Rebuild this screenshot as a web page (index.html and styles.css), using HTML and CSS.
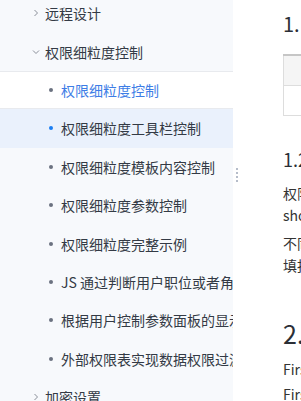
FILE: index.html
```html
<!DOCTYPE html>
<html>
<head>
  <meta charset="utf-8">
  <link rel="stylesheet" href="styles.css">
</head>
<body>
  <div class="page">
    <!-- left menu -->
    <div class="sidebar">
      <div class="menu-title">
        <svg class="arrow" viewBox="0 0 8 8"><path d="M2.5 1 L5.5 4 L2.5 7" /></svg>
        <span>远程设计</span>
      </div>
      <div class="menu-title">
        <svg class="arrow" viewBox="0 0 8 8"><path d="M1 2.5 L4 5.5 L7 2.5" /></svg>
        <span>权限细粒度控制</span>
      </div>
      <div class="sub-item active"><i class="dot"></i><span>权限细粒度控制</span></div>
      <div class="sub-item hover"><i class="dot"></i><span>权限细粒度工具栏控制</span></div>
      <div class="sub-item"><i class="dot"></i><span>权限细粒度模板内容控制</span></div>
      <div class="sub-item"><i class="dot"></i><span>权限细粒度参数控制</span></div>
      <div class="sub-item"><i class="dot"></i><span>权限细粒度完整示例</span></div>
      <div class="sub-item"><i class="dot"></i><span>JS 通过判断用户职位或者角色控制按钮</span></div>
      <div class="sub-item"><i class="dot"></i><span>根据用户控制参数面板的显示与隐藏</span></div>
      <div class="sub-item"><i class="dot"></i><span>外部权限表实现数据权限过滤</span></div>
      <div class="menu-title">
        <svg class="arrow" viewBox="0 0 8 8"><path d="M2.5 1 L5.5 4 L2.5 7" /></svg>
        <span>加密设置</span>
      </div>
    </div>

    <div class="resizer"><i></i><i></i><i></i><i></i></div>

    <!-- doc content -->
    <div class="content">
      <h2 class="h-first">1. 概述</h2>
      <table class="doc-table">
        <tr><th>版本</th><th>功能变动</th></tr>
        <tr><td>10.0</td><td>-</td></tr>
      </table>
      <h3>1.2 应用场景</h3>
      <p>权限细粒度控制可以根据用户的权限控制工具栏按钮的<br>show 与 hide。</p>
      <p>不同的用户登录后看到的报表内容不同，可<br>填报的范围也不同。</p>
      <h2 class="h-big">2. 示例</h2>
      <p class="step">First step</p>
      <p class="step">First step</p>
    </div>
  </div>
</body>
</html>
```

FILE: styles.css
```css
  body {
    margin: 0;
    background-color: #ffffff;
    font-family: "Noto Sans CJK SC", "Noto Sans", sans-serif;
    color: #333333;
  }

  .page {
    display: flex;
    height: 401px;
    overflow: hidden;
    position: relative;
  }

  /* left menu */
  .sidebar {
    width: 233px;
    flex: none;
    background-color: #f7f9fc;
    margin-top: -6px;
    font-size: 14px;
  }

  .menu-title,
  .sub-item {
    height: 38.4px;
    display: flex;
    align-items: center;
    white-space: nowrap;
    overflow: hidden;
    color: #333a45;
  }

  .menu-title {
    padding-left: 32px;
  }

  .arrow {
    width: 8px;
    height: 8px;
    margin-right: 5px;
    fill: none;
    stroke: #8a8f99;
    stroke-width: 1;
  }

  .sub-item {
    padding-left: 49px;
    box-sizing: border-box;
  }

  .dot {
    width: 4px;
    height: 4px;
    border-radius: 50%;
    background-color: #6b7280;
    margin-right: 8px;
    flex: none;
  }

  .sub-item.active {
    background-color: #ffffff;
    border-top: 1px solid #e8eaee;
    border-bottom: 1px solid #e8eaee;
    color: #3d7de6;
  }

  .sub-item.hover {
    background-color: #eaf1fc;
  }

  .sub-item.hover .dot {
    background-color: #1a7ef2;
  }

  /* drag handle between columns */
  .resizer {
    position: absolute;
    left: 236px;
    top: 168px;
    display: flex;
    flex-direction: column;
    gap: 2px;
  }

  .resizer i {
    width: 2px;
    height: 2px;
    background-color: #b6bdca;
  }

  /* content */
  .content {
    padding-left: 50px;
    white-space: nowrap;
    font-size: 14px;
  }

  .content h2,
  .content h3 {
    font-weight: normal;
    margin: 0;
    color: #2b2f36;
  }

  .h-first {
    font-size: 20px;
    margin-top: 9px !important;
    line-height: 30px;
  }

  .doc-table {
    border-collapse: collapse;
    margin-top: 15px;
    width: 500px;
    border-top: 2px solid #c6c6c6;
  }

  .doc-table th,
  .doc-table td {
    border: 1px solid #dddddd;
    height: 29px;
    width: 50%;
    padding: 0 10px;
    text-align: center;
    font-weight: normal;
  }

  .doc-table th {
    background-color: #f5f5f5;
  }

  .content h3 {
    font-size: 18px;
    margin-top: 30px;
    line-height: 26px;
  }

  .content p {
    margin: 0 0 6px;
    line-height: 22px;
  }

  .content h3 + p {
    margin-top: 10px;
  }

  .h-big {
    font-size: 25px;
    margin-top: 40px !important;
    line-height: 34px;
  }

  .content .step {
    margin: 0 0 3px;
  }

  .h-big + .step {
    margin-top: 8px;
  }
```
